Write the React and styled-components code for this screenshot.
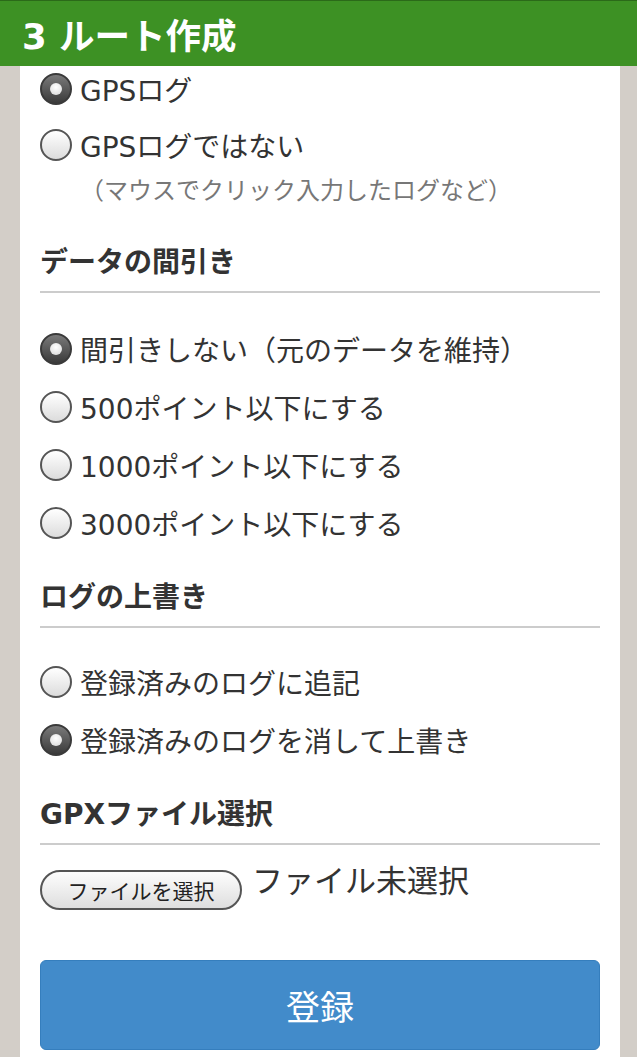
import React from "react";
import styled, { createGlobalStyle } from "styled-components";

const GlobalStyle = createGlobalStyle`
  html, body {
    margin: 0;
    padding: 0;
    background: #d3cec8;
    font-family: "DejaVu Sans", "Noto Sans CJK JP", sans-serif;
    color: #333;
  }
`;

const Page = styled.div`
  width: 637px;
  height: 1057px;
  overflow: hidden;
  display: flex;
  flex-direction: column;
`;

const Header = styled.header`
  height: 65px;
  flex-shrink: 0;
  background: #3d9124;
  border-top: 1px solid #2b6a19;
  display: flex;
  align-items: center;
  padding-left: 22px;
  color: #fff;
  font-size: 35.5px;
  font-weight: bold;
`;

const Panel = styled.main`
  margin-left: 20px;
  width: 600px;
  flex: 1;
  background: #fff;
  padding: 3px 20px 0;
  box-sizing: border-box;
`;

const Options = styled.div`
  display: flex;
  flex-direction: column;
  gap: ${(p) => p.$gap || 18}px;
  margin-top: ${(p) => p.$top || 0}px;
`;

const Row = styled.label`
  height: 40px;
  display: flex;
  align-items: center;
  gap: 8px;
  font-size: 28px;
  color: #333;
`;

const Radio = styled.input.attrs({ type: "radio" })`
  appearance: none;
  margin: 0;
  width: 32px;
  height: 32px;
  border-radius: 50%;
  box-sizing: border-box;
  flex-shrink: 0;
  border: 2px solid #555;
  background: linear-gradient(#fff, #dcdcdc);
  position: relative;

  &:checked {
    border-color: #3a3a3a;
    background: linear-gradient(#7a7a7a, #3a3a3a);
  }

  &:checked::after {
    content: "";
    position: absolute;
    left: 50%;
    top: 50%;
    width: 12px;
    height: 12px;
    margin: -6px 0 0 -6px;
    border-radius: 50%;
    background: radial-gradient(circle at 50% 35%, #fff, #d8d8d8);
  }
`;

const Note = styled.p`
  margin: 11px 0 0 40px;
  font-size: 24px;
  color: #777;
  line-height: 30px;
`;

const Heading = styled.h2`
  margin: ${(p) => p.$top}px 0 0;
  padding-bottom: 8px;
  border-bottom: 2px solid #cccccc;
  font-size: 28px;
  font-weight: bold;
  line-height: 40px;
  color: #333;
`;

const FileRow = styled.div`
  display: flex;
  align-items: flex-start;
  gap: 10px;
  margin-top: 25px;
`;

const FileButton = styled.button`
  width: 202px;
  height: 40px;
  border-radius: 20px;
  border: 2px solid #555;
  background: linear-gradient(#fdfdfd, #dedede);
  font-family: inherit;
  font-size: 21px;
  color: #222;
  padding: 0;
`;

const FileName = styled.span`
  font-size: 31px;
  line-height: 22px;
  color: #333;
`;

const Submit = styled.button`
  margin-top: 50px;
  width: 560px;
  height: 90px;
  border-radius: 6px;
  border: 1px solid #357ebd;
  background: #428bca;
  color: #fff;
  font-family: inherit;
  font-size: 34px;
`;

const Group = ({ name, items, checked, top, gap }) => (
  <Options $top={top} $gap={gap}>
    {items.map((t, i) => (
      <Row key={t}>
        <Radio name={name} defaultChecked={i === checked} />
        {t}
      </Row>
    ))}
  </Options>
);

export default function App() {
  return (
    <Page>
      <GlobalStyle />
      <Header>3 ルート作成</Header>
      <Panel>
        <Group name="kind" gap={16} items={["GPSログ", "GPSログではない"]} checked={0} />
        <Note>（マウスでクリック入力したログなど）</Note>

        <Heading $top={37}>データの間引き</Heading>
        <Group
          name="thin"
          top={36}
          checked={0}
          items={[
            "間引きしない（元のデータを維持）",
            "500ポイント以下にする",
            "1000ポイント以下にする",
            "3000ポイント以下にする",
          ]}
        />

        <Heading $top={35}>ログの上書き</Heading>
        <Group
          name="over"
          top={34}
          checked={1}
          items={["登録済みのログに追記", "登録済みのログを消して上書き"]}
        />

        <Heading $top={35}>GPXファイル選択</Heading>
        <FileRow>
          <FileButton>ファイルを選択</FileButton>
          <FileName>ファイル未選択</FileName>
        </FileRow>
        <Submit>登録</Submit>
      </Panel>
    </Page>
  );
}
